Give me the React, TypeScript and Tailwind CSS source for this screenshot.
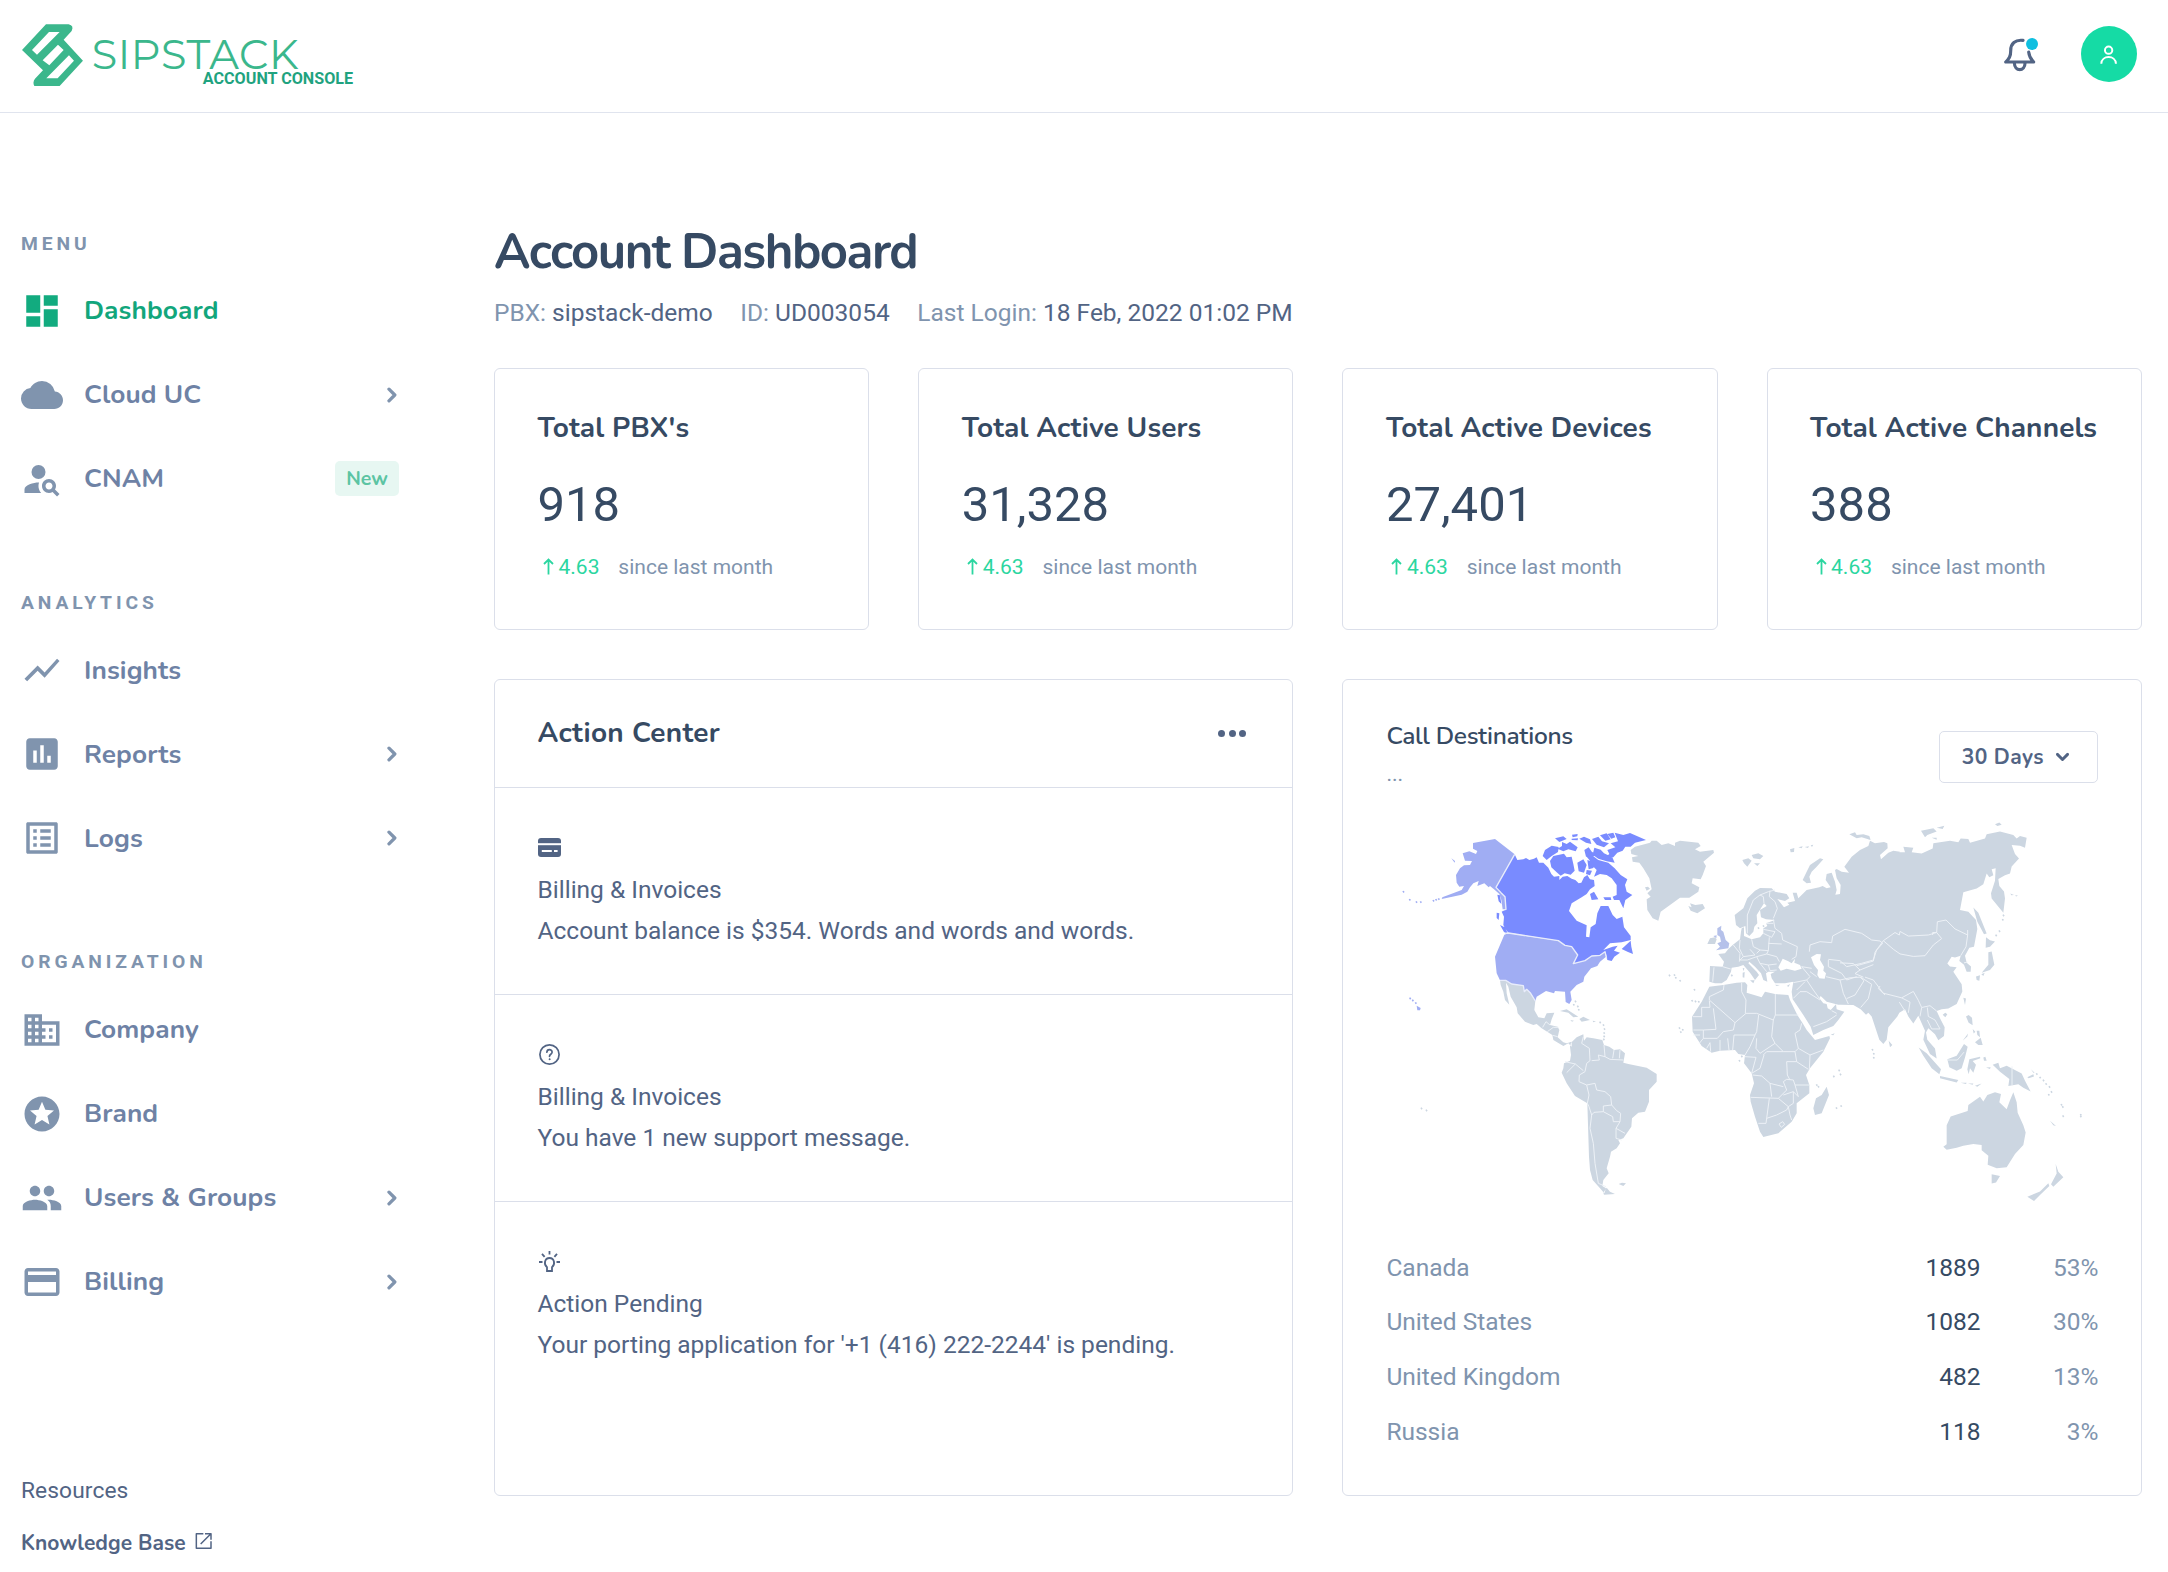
import React from 'react';
import type { ReactNode } from 'react';
import {
  MdAssessment, MdBusiness, MdCloud, MdCreditCard, MdDashboard, MdListAlt,
  MdPeople, MdPersonSearch, MdShowChart, MdStars,
} from 'react-icons/md';
import type { IconType } from 'react-icons';

/* ---------- World map ---------- */

type Pt = [number, number];
const parse = (s: string): Pt[] => s.trim().split(/\s+/).map((p) => p.split(',').map(Number) as Pt);
const west = (s: string) => parse(s);
const mid = (s: string) => parse(s).map(([x, y]): Pt => [x + 810, y]);
const east = (s: string) => parse(s).map(([x, y]): Pt => [x + 1350, y * 1.0714 - 390]);
const line = (p: Pt[]) => 'M' + p.map(([x, y]) => `${x} ${y.toFixed(1)}`).join('L');
const area = (p: Pt[]) => line(p) + 'Z';
const areas = (f: (s: string) => Pt[], list: string[]) => list.map((s) => area(f(s))).join('');
const lines = (f: (s: string) => Pt[], list: string[]) => list.map((s) => line(f(s))).join('');
const dots = (f: (s: string) => Pt[], s: string) =>
  f(s).map(([x, y]) => `M${x - 3} ${y - 2}l4 -2l3 4l-4 3z`).join('');

const alaska = areas(west, [
  '249,129 315,117 374,163 318,262 333,278 345,290 348,328 338,328 334,300 328,282 312,268 300,258 296,262 283,250 262,258 266,243 250,250 240,262 232,275 215,284 155,297 157,292 215,270 222,258 208,260 200,248 198,225 210,205 222,196 240,195 246,183 225,182 218,160 238,154 258,162 262,153 249,146',
  '184,175 195,183 194,188',
]) + dots(west, '40,276 59,300 79,307 92,307 130,303 138,300 146,298');

const canada = areas(west, [
  '374,163 382,180 400,178 408,174 418,180 432,176 440,172 447,188 460,188 475,203 484,222 492,230 508,228 508,240 518,230 532,228 545,236 556,240 566,250 574,248 582,232 592,225 600,238 612,240 614,258 600,268 590,282 575,292 545,310 537,333 560,362 590,376 588,410 598,412 602,382 617,372 622,340 632,318 655,318 668,345 680,357 697,350 702,382 722,408 722,420 695,427 660,430 640,450 668,440 683,437 672,452 690,458 673,470 665,483 652,480 648,462 645,455 630,466 605,468 585,482 550,491 563,465 545,440 525,436 505,422 355,398 345,385 340,375 342,350 335,335 348,328 345,290 333,278 318,262',
  '695,447 722,422 724,440 729,462 714,456',
  '588,168 606,166 625,180 655,188 674,205 692,225 712,238 705,255 710,275 727,285 706,300 700,325 688,300 672,300 668,290 680,285 680,255 665,235 650,225 630,222 612,230 620,210 606,196 600,182',
  '600,282 612,275 625,298 605,300',
  '640,292 662,292 664,300 645,300',
  '480,183 490,168 522,161 530,172 545,170 550,192 554,212 542,224 524,220 512,227 500,217 484,202',
  '458,168 465,150 485,137 506,141 504,156 485,168 470,180',
  '495,115 520,109 530,117 508,126',
  '503,146 516,138 516,126 530,132 540,125 563,142 557,154 535,148 520,154',
  '546,104 563,102 562,109 548,112', '545,116 564,115 563,121 545,120',
  '568,116 582,110 600,118 604,132 588,128',
  '583,150 596,142 606,156 622,162 608,170 588,170',
  '562,188 580,178 590,195 582,218 566,214', '592,180 616,188 610,204 596,208', '590,210 606,212 600,226 588,222',
  '630,198 648,194 664,206 652,216 634,210',
  '613,143 632,149 642,160 667,172 674,188 650,184 625,176 608,164',
  '606,117 625,110 636,124 657,130 642,142 620,134',
  '630,106 650,100 662,118 646,122',
  '643,174 658,162 652,150 676,142 662,130 684,124 674,98 700,105 720,99 768,120 735,128 722,140 706,140 698,152 682,158 670,172',
  '652,102 670,98 676,112 664,116',
  '330,375 344,382 355,403 342,396', '320,338 328,340 326,360 320,354', '322,284 330,286 334,312 326,304',
]);

const usa = areas(west, [
  '355,400 505,422 525,436 545,440 563,465 550,491 585,482 605,468 630,466 645,455 648,470 630,485 622,498 603,505 583,530 580,545 560,555 541,575 545,600 538,612 527,606 525,575 495,573 492,580 468,573 440,590 436,603 422,580 410,568 403,575 400,557 365,552 347,541 330,541 320,520 315,470 343,404',
  '80,617 92,624 90,631 82,631',
]) + dots(west, '60,596 68,602 77,610');

const northBorders = lines(west, [
  '374,163 318,262 333,278 345,290 348,328 338,330',
  '345,400 355,399 505,422 525,436 545,440 563,465 550,491 585,482 605,468 630,466 645,455 650,476',
  '330,541 347,541 365,552 400,557 403,575 410,568 422,580 436,603',
]);

const uk = areas(mid, [
  '172,385 184,377 183,390 190,395 197,420 208,430 205,445 190,447 168,451 180,440 172,430 183,425 180,410 172,405',
  '160,408 170,406 169,415',
]);

const landWest = areas(west, [
  '330,541 347,541 365,552 400,557 403,575 410,568 422,580 436,603 433,630 445,652 463,655 470,640 493,638 485,658 480,675 503,680 508,690 503,712 520,727 530,730 545,725 545,740 535,730 520,738 490,720 487,705 455,685 440,672 430,675 405,665 383,640 380,622 362,590 355,560 348,548 350,580 358,614 345,600 340,575 332,555',
  '510,633 530,628 565,650 550,652 535,638', '568,657 580,650 600,660 575,665', '541,660 552,662 546,665', '608,662 618,664 610,667',
  '580,703 560,712 543,728 540,740 543,765 540,782 522,790 520,805 515,818 530,850 555,888 592,910 597,1070 600,1110 608,1140 630,1165 643,1180 648,1165 637,1158 640,1140 656,1120 650,1105 660,1070 663,1055 680,1045 690,1030 685,1020 700,1015 724,980 726,955 745,938 765,935 777,905 777,870 800,845 800,822 770,803 715,792 700,788 705,760 690,748 672,750 658,740 642,735 637,720 610,715 590,712 582,722',
  '640,1178 650,1163 660,1175 675,1182 642,1184', '686,1152 696,1148 708,1150 700,1158',
  '722,150 735,140 780,128 785,122 800,122 815,135 835,130 855,138 855,128 870,122 925,128 932,138 915,148 930,155 970,150 972,158 940,185 948,198 938,225 932,238 908,235 905,250 928,262 925,275 898,293 870,293 840,315 812,335 805,362 788,355 772,330 770,298 782,290 772,280 785,268 778,235 760,205 748,188 728,185 726,172 745,168 724,162',
  '765,262 774,260 780,266 770,272', '895,318 905,322 900,310 916,315 938,312 945,325 922,340 902,332',
]) + dots(west, '94,926 109,932 556,605 551,615 563,620 566,630 630,668 640,676 643,688 642,700 642,710 641,719 838,527 853,526 857,534 870,543 913,570 906,603 916,605 926,606 868,685 878,690 872,697');

const eurasia = area([
  ...mid('228,375 224,345 250,325 262,295 285,272 300,264 335,265 345,275 380,282 388,295 375,303 352,297 372,322 388,314 382,308 405,303 398,278 410,278 415,295 440,270 478,262 488,258 500,265 512,262 497,240 500,222 515,218 525,245 530,270 526,284 540,282 542,255 530,235 525,210 530,207 545,215 567,218 553,200 575,170 600,150 625,138 630,122 645,130 672,126 682,130 683,145 660,165 663,178 685,158 700,152 720,155'),
  ...east('178,510 195,510 190,495 220,498 215,510 245,514 278,500 280,485 330,478 355,482 362,472 385,473 390,484 435,472 440,460 480,452 520,462 530,472 540,465 560,470 555,498 540,492 515,490 525,515 537,528 515,550 510,570 495,575 475,585 478,605 492,620 495,640 490,680 455,640 453,625 465,590 467,555 455,558 460,575 448,580 440,570 430,600 410,612 370,622 360,672 385,677 408,700 412,725 402,775 388,778 375,800 380,820 393,830 392,845 380,845 372,825 358,815 362,800 345,805 335,803 322,822 330,830 350,832 340,845 365,880 367,900 350,935 325,948 305,950 290,955 300,975 314,1000 312,1025 295,1037 285,1020 265,1003 258,1015 262,1035 285,1060 290,1088 270,1075 250,1035 255,1010 243,985 235,968 220,990 205,970 195,950 178,960 172,970 145,1000 140,1035 130,1047 118,1035 95,970 85,960 78,965 62,950 40,938 0,937'),
  ...mid('535,614 500,605 482,588 478,595 490,610 500,612 503,625 512,630 528,613 530,628 553,635 535,660 520,678 490,690 460,705 452,680 430,645 410,615 398,598 395,575 400,545 375,550 345,550 335,535 332,522 345,515 325,515 318,520 322,545 310,540 303,520 285,500 268,485 265,490 290,515 297,525 285,540 270,518 250,495 235,500 215,503 213,515 200,540 185,550 165,550 148,545 150,498 188,500 192,485 175,462 195,460 205,447 218,435 240,418 243,395 245,385 252,382 252,408 275,418 300,412 310,400 310,385 322,378 318,370 345,360 318,358 303,352 300,330 320,318 312,310 290,345 292,370 283,380 280,395 268,408 258,400 256,378 240,385'),
]);

const landMid = eurasia + areas(mid, [
  '148,560 165,558 190,555 230,548 255,547 262,555 260,578 305,592 315,575 345,582 385,585 390,600 412,645 428,670 440,690 465,720 508,708 510,715 490,755 450,805 438,825 448,855 448,880 410,910 410,940 395,965 355,1000 310,1011 300,995 285,950 272,905 270,885 282,850 275,820 252,790 255,765 235,762 225,750 180,752 155,758 125,738 98,695 96,650 125,605',
  '500,860 507,885 485,940 465,945 460,925 468,895 485,885',
  '142,432 150,415 165,412 170,418 165,432', '247,180 265,175 275,182 262,200 252,190', '275,165 295,160 310,168 300,178 280,175', '282,190 300,190 292,198',
  '428,240 440,215 450,195 480,175 490,178 470,200 455,215 448,230 453,248 440,250',
  '568,103 585,97 590,105 610,103 628,108 632,120 605,112 590,115', '390,148 403,144 402,156 392,157', '415,142 428,139 425,145', '434,141 447,139 444,144', '452,136 460,134 456,141',
  '512,704 524,700 520,706', '270,541 284,541 280,550', '248,518 254,516 253,533 248,532', '248,505 253,504 251,514', '345,554 360,555 350,558', '380,558 390,552 386,560', '686,722 697,735 690,742',
]) + dots(mid, '215,527 310,379 295,385 245,770 238,783 637,750 641,762 641,774 537,812 541,824 521,830 470,856 475,861 529,925 543,919');

const landEast = areas(east, [
  '400,665 415,680 440,738 432,740 412,705', '438,748 450,757 465,760 450,775 437,778', '445,790 455,788 463,825 450,840 425,848 445,825', '408,858 420,855 418,870 410,868', '424,852 434,848 430,857',
  '370,918 378,920 375,938', '308,965 316,960 322,964 316,972', '378,970 386,966 396,974 398,995 386,988',
  '398,1005 406,1013 401,1018', '410,1010 418,1010 420,1028 412,1022', '405,1042 422,1030 428,1050 415,1050', '368,1038 384,1018 382,1026',
  '236,1057 260,1073 303,1118 298,1132 275,1115 250,1080', '300,1137 355,1148 350,1155 300,1143', '322,1090 350,1080 372,1047 383,1055 375,1085 365,1115 350,1122 328,1112',
  '388,1090 420,1083 421,1087 398,1095 408,1105 400,1128 390,1115 386,1132 382,1118', '362,1156 380,1156 378,1159', '384,1158 400,1158 398,1161', '405,1164 425,1158 412,1167', '430,1085 436,1083 440,1094 432,1094', '438,1113 452,1112 450,1117',
  '458,1105 475,1100 480,1115 500,1108 545,1130 555,1150 572,1180 550,1170 535,1160 505,1165 508,1145 480,1125', '562,1140 580,1132 582,1138 566,1143', '573,1118 584,1128 580,1128',
  '520,1182 530,1210 533,1240 550,1275 557,1295 550,1330 525,1355 500,1392 470,1395 443,1385 445,1360 425,1345 425,1330 400,1327 370,1332 350,1338 320,1343 310,1335 320,1328 320,1275 332,1250 383,1235 385,1218 420,1195 430,1208 442,1190 465,1182 483,1187 478,1210 500,1230 510,1205',
  '455,1412 480,1417 468,1435 455,1438', '647,1383 655,1405 670,1420 640,1447 633,1440 650,1410', '625,1437 628,1445 600,1470 582,1487 562,1475 600,1460', '630,1262 648,1277 640,1275',
  '243,450 280,443 290,452 262,462 255,468', '290,442 313,436 308,445', '275,470 290,470 290,475', '465,432 478,427 485,433 472,437', '511,626 522,630 514,631', '526,630 534,632 528,634',
]) + dots(east, '590,1132 600,1142 610,1150 618,1160 628,1168 634,1182 626,1190 664,1218 668,1224 669,1250 722,1246 722,1251 478,732 468,744 488,700 490,688');

const borders =
  lines(west, [
    '580,710 575,730 598,745 600,782 590,790 585,815 568,825 567,845 590,855', '525,785 556,792 530,818', '556,792 580,812', '642,735 645,770 625,765 628,780 605,782', '645,770 660,778 700,780', '672,750 668,775', '690,750 688,775',
    '590,855 615,850 620,870 645,875 662,890 665,915 640,918 640,935 612,937 605,945 597,920 592,910 597,885 590,855', '640,935 668,950 670,965 690,965 692,940 680,932 665,915', '605,945 600,985 610,1030 615,1090 625,1150 648,1160', '690,965 678,985 705,1000', '678,985 678,1015 695,1020',
    '458,682 468,665 480,675', '472,695 490,682 505,682', '488,706 503,710',
  ]) +
  lines(mid, [
    '148,590 190,570 192,555', '148,590 148,600 225,668', '148,602 150,622 125,622 125,650 98,650', '160,625 168,688 130,690 100,690', '225,668 258,640 290,640 340,660', '245,548 245,575 258,600 256,640', '346,582 346,645 415,645', '346,645 340,660 335,710 345,730', '296,645 290,695 285,705',
    '225,668 220,690 190,695 172,715 130,715 130,690', '180,720 180,752', '203,715 207,750', '218,750 222,705 285,705 270,740 255,765', '290,715 288,745 300,760 345,730 370,755 320,755 310,765', '425,670 420,690 405,700 415,745 405,755', '415,745 450,765 490,750', '450,765 448,808', '370,755 405,755 410,785 445,808', '410,785 380,785 382,825 390,840',
    '312,765 300,805 275,820', '255,770 288,772 275,820', '278,825 305,828 330,850 335,890', '272,892 355,895 380,870 370,845 380,838 400,840 405,855 448,855', '330,850 370,860', '405,855 415,890 400,875', '355,895 385,920 400,910 400,875 370,885', '328,895 318,970 295,970', '320,955 350,945 380,930 385,920 390,945 395,960', '357,972 368,965 374,973 364,982 357,972', '100,705 120,705', '118,730 130,715', '140,745 150,728', '150,728 152,755',
    '448,455 450,435 480,425 515,428 518,408 555,388 605,400 635,420 660,423 668,430', '505,478 540,482 560,500 605,490 640,480 650,450 668,430',
    '262,400 262,345 280,300 300,285 325,275 345,270', '312,310 310,290 300,285', '330,272 328,290 345,305 352,325 340,355', '340,358 345,385 365,400 368,420 412,440 408,470 395,478', '310,400 335,412 345,395 310,388', '340,370 318,370',
    '275,418 280,440 300,450 325,452 328,412', '325,430 365,432', '240,420 238,445 250,470 285,465 270,448', '220,435 240,460 238,485', '188,500 212,507', '162,502 158,545', '250,470 240,480 262,480 290,470 320,462 350,470 358,485', '290,470 300,490 325,495 350,492', '300,490 320,515', '325,495 330,512 350,510', '300,450 290,460', '325,452 320,462',
    '400,548 440,540 450,530 425,500 455,505', '440,540 460,570 478,595', '400,595 420,575 440,575 480,600', '410,570 435,545', '460,680 500,665 530,645', '515,632 530,640', '450,515 470,530', '498,530 540,540 550,580 565,612', '505,480 505,500 545,520 560,540 590,530',
  ]) +
  lines(east, [
    '130,758 165,735 178,742 180,732 205,745 265,742 290,735 305,752 280,770 255,800 220,802 180,795 160,782 130,758', '278,742 278,735 290,735 292,705 318,700 345,725 383,742 383,728', '383,742 378,775 362,800', '372,820 382,818',
    '75,860 100,868 130,905 185,918 220,900 235,925 245,945 270,940 290,955', '120,885 115,892 135,910', '178,930 195,955', '185,918 210,930 205,960', '245,945 240,970', '262,945 265,970 285,980 300,1005', '262,980 275,1005 300,1005', '62,860 95,880 85,920 62,945', '0,868 30,862 60,860 72,870 45,910 20,920',
    '50,828 100,815 105,790 130,758', '0,820 40,822 60,840 100,825', '60,840 45,850 70,860', '322,1092 352,1092 372,1070', '516,1110 516,1165',
  ]);

const seas = areas(mid, [
  '355,502 368,476 385,484 395,490 405,476 403,488 420,495 425,506 405,512 380,506 362,512',
  '453,472 470,462 483,463 480,480 492,500 490,512 498,520 494,536 478,535 472,525 474,510 462,495',
]);

function WorldMap() {
  return (
    <svg viewBox="-12 45 2136 1170" className="block h-[390px] w-[712px]" fill="#ccd6e1">
      <path d={landWest} />
      <path d={landMid} />
      <path d={landEast} />
      <path d={seas} fill="#fff" />
      <path d={uk} fill="#b5c1ea" />
      <path d={borders} fill="none" stroke="#edf2f7" strokeWidth="2.9" strokeLinejoin="round" />
      <path d={canada} fill="#798bff" />
      <path d={usa} fill="#a0adf3" />
      <path d={alaska} fill="#a0adf3" />
      <path d={northBorders} fill="none" stroke="#e8ecfb" strokeWidth="4" strokeLinejoin="round" />
    </svg>
  );
}

/* ---------- Icons ---------- */

const LogoMark = () => (
  <svg viewBox="65 71 184 187" className="h-[62.3px] w-[61.3px]" fill="#3bb78c" fillRule="evenodd">
    <path d="M137 72H205Q222 76 214 92L190 118L248 181L178 257H102Q96 246 104 235L128 210L65 149ZM146 95L95 149L110 163L178 95ZM173 133L190 149L147 195L127 180ZM206 165L221 181L172 234H138Z" />
  </svg>
);

const Bell = () => (
  <svg viewBox="130 114 106 104" className="h-[34.7px] w-[35.3px] translate-x-[0.4px] translate-y-[0.7px]" fill="none" stroke="#526484" strokeWidth="9.5" strokeLinecap="round" strokeLinejoin="round">
    <path d="M189 122C165 119 152 132 152 152C152 170 147 177 137 187H221C212 178 207 168 206 157" />
    <path d="M163 189C163 217 195 217 195 189" strokeLinecap="butt" />
    <circle cx="216" cy="133" r="18" fill="#0fbfe0" stroke="none" />
  </svg>
);

const Chevron = ({ className }: { className?: string }) => (
  <svg viewBox="0 0 10 16" className={className} fill="none" stroke="currentColor" strokeWidth="3.3" strokeLinecap="round" strokeLinejoin="round">
    <path d="M2 2.2L7.8 8L2 13.8" />
  </svg>
);

const External = () => (
  <svg viewBox="583 1442 54 54" className="ml-[9px] size-[18px] -translate-y-[3px]" fill="none" stroke="#526484" strokeWidth="4.5" strokeLinejoin="round">
    <path d="M608 1447H587V1491H631V1470" />
    <path d="M600 1478L630 1448M613 1447H631V1465" />
  </svg>
);

const ArrowUp = () => (
  <svg viewBox="0 0 11 17" className="h-[17px] w-[11px] -translate-y-px" fill="none" stroke="currentColor" strokeWidth="1.8">
    <path d="M5.5 16.5V1.5M1 6L5.5 1.5L10 6" />
  </svg>
);

const CardIcon = () => (
  <svg viewBox="0 0 23 19" className="h-[19px] w-[23px]">
    <rect width="23" height="19" rx="3" fill="#526484" />
    <rect y="5.2" width="23" height="2" fill="#fff" />
    <rect x="3.8" y="12" width="10" height="2" fill="#fff" />
    <rect x="16" y="12" width="3.6" height="2" fill="#fff" />
  </svg>
);

const HelpIcon = () => (
  <svg viewBox="0 0 23 23" className="size-[23px]" fill="none" stroke="#526484" strokeWidth="1.7" strokeLinecap="round">
    <circle cx="11.5" cy="11.5" r="9.6" />
    <path d="M8.9 9.2C9 5.7 14.2 5.9 14.1 9.2C14 11.2 11.5 11.3 11.5 13.3" />
    <circle cx="11.5" cy="16.2" r="0.5" fill="#526484" strokeWidth="1" />
  </svg>
);

const BulbIcon = () => (
  <svg viewBox="0 0 23 23" className="size-[23px]" fill="none" stroke="#526484" strokeWidth="1.8">
    <path d="M9 21V17.3C5.4 14.4 6.6 8 11.5 8C16.4 8 17.6 14.4 14 17.3V21Z" />
    <path d="M11.5 1V4.5M4 3.8L6.6 6.8M19 3.8L16.4 6.8M1 12H4.5M18.5 12H22" />
  </svg>
);

/* ---------- Sidebar ---------- */

type Item = { label: string; icon: IconType; active?: boolean; sub?: boolean; badge?: string };

const sections: { title: string; items: Item[] }[] = [
  { title: 'MENU', items: [
    { label: 'Dashboard', icon: MdDashboard, active: true },
    { label: 'Cloud UC', icon: MdCloud, sub: true },
    { label: 'CNAM', icon: MdPersonSearch, badge: 'New' },
  ] },
  { title: 'ANALYTICS', items: [
    { label: 'Insights', icon: MdShowChart },
    { label: 'Reports', icon: MdAssessment, sub: true },
    { label: 'Logs', icon: MdListAlt, sub: true },
  ] },
  { title: 'ORGANIZATION', items: [
    { label: 'Company', icon: MdBusiness },
    { label: 'Brand', icon: MdStars },
    { label: 'Users & Groups', icon: MdPeople, sub: true },
    { label: 'Billing', icon: MdCreditCard, sub: true },
  ] },
];

function Sidebar() {
  return (
    <aside className="w-[399px] shrink-0 pt-[105.4px] pl-[21px]">
      <nav className="flex flex-col gap-[56.7px]">
        {sections.map((s) => (
          <section key={s.title}>
            <h6 className="flex h-[50.6px] items-center pt-px text-[19.25px] font-bold tracking-[3.9px] text-[#8094ae]">{s.title}</h6>
            {s.items.map(({ label, icon: Icon, active, sub, badge }) => (
              <a key={label} className={`flex h-[84px] items-center font-[Nunito,Lato,sans-serif] text-[26.25px] font-bold tracking-[0.1px] ${active ? 'text-[#12a67c]' : 'text-[#6e82a5]'}`}>
                <Icon className={`size-[42px] ${active ? 'text-[#12ab7f]' : 'text-[#8094ae]'}`} />
                <span className="ml-[21px]">{label}</span>
                {sub && <Chevron className="mr-[2px] ml-auto h-[16px] w-[10px] text-[#8094ae]" />}
                {badge && (
                  <span className="ml-auto flex h-[35px] w-[64px] items-center justify-center rounded-[5px] bg-[#e7f7f2] text-[19.5px] tracking-normal text-[#5cc4a3]">{badge}</span>
                )}
              </a>
            ))}
          </section>
        ))}
      </nav>
      <div className="pt-[140.9px]">
        <p className="flex h-[52.5px] items-center text-[22.75px] tracking-[0.1px] text-[#526484]">Resources</p>
        <p className="flex h-[52.5px] items-center pt-px font-[Nunito,Lato,sans-serif] text-[21px] font-bold tracking-[0.05px] text-[#526484]">
          Knowledge Base <External />
        </p>
      </div>
    </aside>
  );
}

/* ---------- Content ---------- */

const stats = [
  { title: "Total PBX's", value: '918' },
  { title: 'Total Active Users', value: '31,328' },
  { title: 'Total Active Devices', value: '27,401' },
  { title: 'Total Active Channels', value: '388' },
];

const actions: { icon: ReactNode; title: string; text: string }[] = [
  { icon: <CardIcon />, title: 'Billing & Invoices', text: 'Account balance is $354. Words and words and words.' },
  { icon: <HelpIcon />, title: 'Billing & Invoices', text: 'You have 1 new support message.' },
  { icon: <BulbIcon />, title: 'Action Pending', text: "Your porting application for '+1 (416) 222-2244' is pending." },
];

const destinations = [
  ['Canada', '1889', '53%'],
  ['United States', '1082', '30%'],
  ['United Kingdom', '482', '13%'],
  ['Russia', '118', '3%'],
];

const meta = [['PBX:', 'sipstack-demo'], ['ID:', 'UD003054'], ['Last Login:', '18 Feb, 2022 01:02 PM']];

function StatCard({ title, value }: { title: string; value: string }) {
  return (
    <div className="h-[262px] rounded-[6px] border border-[#dbdfea] px-[42.5px] pt-[39.5px] whitespace-nowrap">
      <h6 className="font-[Nunito,Lato,sans-serif] text-[28px] leading-[40px] font-bold tracking-[0.13px] text-[#364a63]">{title}</h6>
      <div className="mt-[27px] text-[49px] leading-[60px] text-[#364a63]">{value}</div>
      <div className="mt-[17.4px] flex h-[30px] items-center text-[21px] text-[#8094ae]">
        <span className="ml-[5.5px] flex items-center gap-[4.5px] text-[#2bd6a0]"><ArrowUp />4.63</span>
        <span className="ml-[18.9px]">since last month</span>
      </div>
    </div>
  );
}

export default function App() {
  return (
    <div className="h-[1572px] w-[2168px] overflow-hidden bg-white font-[Roboto,sans-serif] text-[24.5px] text-[#526484]">
      <header className="flex h-[113px] items-center justify-between border-b border-[#e0e4ee] pr-[31px] pl-[21.5px]">
        <div className="flex items-center pb-[2px]">
          <LogoMark />
          <div className="relative ml-[9px] flex">
            <span className="-translate-y-px font-[Montserrat,Lato,sans-serif] text-[41.4px] leading-[50px] font-normal tracking-[0.5px] text-[#3bb78c]">SIPSTACK</span>
            <span className="absolute top-[39px] left-[111px] text-[16.15px] leading-[20px] font-bold whitespace-nowrap text-[#1fa37f]">ACCOUNT CONSOLE</span>
          </div>
        </div>
        <div className="flex items-center gap-[42.5px] pb-[4px]">
          <Bell />
          <span className="flex size-[56px] items-center justify-center rounded-full bg-[#15dba5]">
            <svg viewBox="417 134 55 60" className="h-[20px] w-[18.3px] -translate-x-[0.7px] translate-y-[0.5px]" fill="none" stroke="#fff" strokeWidth="6">
              <circle cx="445" cy="151" r="11" />
              <path d="M423 192C424 165 466 165 467 192" />
            </svg>
          </span>
        </div>
      </header>
      <div className="flex">
        <Sidebar />
        <main className="ml-[95px] w-[1647.75px] pt-[112px]">
          <h1 className="font-[Nunito,Lato,sans-serif] text-[49px] leading-[54px] font-bold tracking-[-1.47px] text-[#364a63]">Account Dashboard</h1>
          <div className="mt-[14.6px] flex h-[40px] items-center gap-[27.6px]">
            {meta.map(([k, v]) => (
              <span key={k} className="whitespace-pre"><span className="text-[#8094ae]">{k}</span> {v}</span>
            ))}
          </div>
          <div className="mt-[34.4px] grid grid-cols-4 gap-[49px]">
            {stats.map((s) => <StatCard key={s.title} {...s} />)}
          </div>
          <div className="mt-[49px] grid h-[817px] grid-cols-2 gap-[49px]">
            <section className="rounded-[6px] border border-[#dbdfea]">
              <div className="flex h-[108px] items-center justify-between border-b border-[#dbdfea] pr-[46px] pl-[42.5px]">
                <h6 className="font-[Nunito,Lato,sans-serif] text-[28px] font-bold tracking-[0.3px] text-[#364a63]">Action Center</h6>
                <span className="flex gap-[3.5px]">
                  {[0, 1, 2].map((i) => <i key={i} className="size-[7.2px] rounded-full bg-[#526484]" />)}
                </span>
              </div>
              {actions.map((a, i) => (
                <div key={i} className={`h-[207px] px-[42.5px] pt-[39.3px] leading-[41.3px] ${i < 2 ? 'border-b border-[#dbdfea]' : ''}`}>
                  <div className="flex h-[41.3px] items-center">{a.icon}</div>
                  <p>{a.title}</p>
                  <p>{a.text}</p>
                </div>
              ))}
            </section>
            <section className="rounded-[6px] border border-[#dbdfea] pt-[37px]">
              <div className="flex h-[98px] items-start justify-between pr-[42.7px] pl-[43px]">
                <div>
                  <h6 className="font-[Nunito,Lato,sans-serif] text-[24.5px] leading-[38px] font-semibold tracking-[-0.29px] text-[#364a63]">Call Destinations</h6>
                  <p className="mt-px text-[21px] leading-[37px] text-[#8094ae]">...</p>
                </div>
                <button className="mt-[14px] flex h-[52px] w-[159px] items-center rounded-[5px] border border-[#dbdfea] pt-px pl-[21.6px] font-[Nunito,Lato,sans-serif] text-[21px] font-bold tracking-[0.42px]">
                  30 Days
                  <Chevron className="ml-[14px] h-[14px] w-[9px] rotate-90" />
                </button>
              </div>
              <div className="ml-[43px]"><WorldMap /></div>
              <dl className="mt-[35.6px] pr-[42.3px] pl-[43px] text-[#8094ae]">
                {destinations.map(([c, n, p]) => (
                  <div key={c} className="flex h-[54.8px] items-center">
                    <dt>{c}</dt>
                    <dd className="ml-auto text-[#364a63]">{n}</dd>
                    <dd className="w-[118px] text-right">{p}</dd>
                  </div>
                ))}
              </dl>
            </section>
          </div>
        </main>
      </div>
    </div>
  );
}
